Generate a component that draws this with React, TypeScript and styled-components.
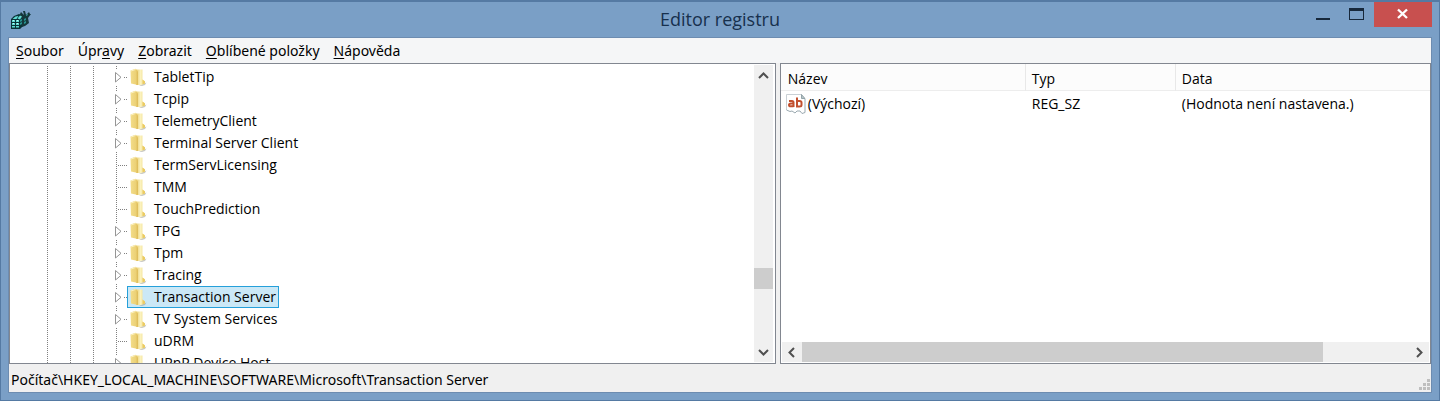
import React from "react";
import styled, { createGlobalStyle } from "styled-components";

const GlobalStyle = createGlobalStyle`
  * { box-sizing: border-box; }
  html, body, #root { height: 100%; }
  body {
    margin: 0;
    font: 14px/20px "Open Sans", "Noto Sans", sans-serif;
    color: #000;
  }
  button { font: inherit; color: inherit; border: 0; padding: 0; background: none; }
`;

const Window = styled.div`
  display: flex;
  flex-direction: column;
  height: 100%;
  padding: 0 7px 7px;
  background: #7a9fc6;
  border: 1px solid #557aa3;
  border-top-width: 2px;
  overflow: hidden;
`;

const TitleBar = styled.header`
  display: grid;
  grid-template-columns: 1fr auto 1fr;
  flex: none;
  height: 35px;
`;

const AppIcon = styled.svg`
  width: 22px;
  height: 22px;
  margin: 7px 0 0 2px;
`;

const Title = styled.h1`
  margin: 0;
  font-size: 18px;
  font-weight: 400;
  line-height: 34px;
  color: #17304d;
`;

const WindowButtons = styled.div`
  display: flex;
  justify-content: flex-end;
`;

const CaptionButton = styled.button<{ $close?: boolean }>`
  width: ${(p) => (p.$close ? 58 : 34)}px;
  height: 25px;
  background: ${(p) => (p.$close ? "#c8504f" : "transparent")};
  svg { display: block; margin: 0 auto; }
`;

const Client = styled.div`
  display: flex;
  flex-direction: column;
  flex: 1;
  min-height: 0;
  background: #f0f0f0;
  border: 1px solid #6d8cb0;
`;

const MenuBar = styled.nav`
  display: flex;
  flex: none;
  height: 25px;
  font-family: "Noto Sans", "Open Sans", sans-serif;
  background: #f5f6f7;
`;

const MenuItem = styled.button`
  padding: 0 7px;
  line-height: 24px;
  u { text-underline-offset: 2px; text-decoration-thickness: 1px; }
`;

const Panes = styled.main`
  display: flex;
  gap: 4px;
  flex: 1;
  min-height: 0;
`;

const Pane = styled.section<{ $share: number }>`
  display: flex;
  flex: ${(p) => p.$share} 1 0;
  min-width: 0;
  background: #fff;
  border: 1px solid #828790;
`;

const TreePane = styled(Pane)`
  padding-right: 2px;
`;

const ListPane = styled(Pane)`
  flex-direction: column;
  padding-bottom: 1px;
`;

const Tree = styled.ul`
  flex: 1;
  min-width: 0;
  margin: 0;
  padding: 2px 0 0 26px;
  list-style: none;
  overflow: hidden;
`;

const TreeRow = styled.li`
  display: flex;
  height: 22px;
`;

const Guide = styled.span`
  flex: none;
  width: 23px;
  background: repeating-linear-gradient(#808080 0 1px, transparent 1px 2px) 11px 0 / 1px 100% no-repeat;
`;

const Connector = styled.svg`
  flex: none;
  width: 22px;
  height: 22px;
`;

const NodeLabel = styled.span<{ $selected?: boolean }>`
  display: flex;
  gap: 7px;
  padding: 0 2px;
  line-height: 20px;
  white-space: nowrap;
  border: 1px solid ${(p) => (p.$selected ? "#26a0da" : "transparent")};
  background: ${(p) => (p.$selected ? "#cbe8f6" : "transparent")};
  svg { flex: none; margin-top: 1px; }
`;

const ScrollBar = styled.div<{ $horizontal?: boolean }>`
  display: flex;
  flex: none;
  flex-direction: ${(p) => (p.$horizontal ? "row" : "column")};
  ${(p) => (p.$horizontal ? "height: 20px; margin: 0 1px;" : "width: 19px; margin: 1px 0;")}
  background: #f0f0f0;
`;

const ScrollButton = styled.button`
  display: grid;
  place-items: center;
  flex: none;
  width: 20px;
  height: 20px;
`;

const Track = styled.div<{ $horizontal?: boolean }>`
  display: flex;
  flex: 1;
  flex-direction: ${(p) => (p.$horizontal ? "row" : "column")};
`;

const TrackSpace = styled.span<{ $share: number }>`
  flex: ${(p) => p.$share} 1 0;
`;

const Thumb = styled.span<{ $share: number }>`
  flex: ${(p) => p.$share} 1 0;
  background: #cdcdcd;
`;

const TableArea = styled.div`
  flex: 1;
  min-height: 0;
  overflow: hidden;
`;

const Values = styled.table`
  width: 100%;
  table-layout: fixed;
  border-collapse: separate;
  border-spacing: 0;
  th, td {
    text-align: left;
    font-weight: 400;
    white-space: nowrap;
    padding: 0 6px;
  }
  th {
    height: 27px;
    padding-top: 3px;
    background: #fcfcfc;
    border-bottom: 1px solid #ededed;
    border-right: 1px solid #e8e8e8;
  }
  th:first-child { padding-left: 7px; }
  th:last-child { border-right: 0; }
  td { height: 26px; }
  td:first-child { padding-left: 5px; }
`;

const Column = styled.col<{ $width?: number }>`
  width: ${(p) => (p.$width ? `${p.$width}px` : "auto")};
`;

const ValueName = styled.span`
  display: flex;
  align-items: center;
  gap: 2px;
`;

const StatusBar = styled.footer`
  display: flex;
  justify-content: space-between;
  align-items: flex-end;
  flex: none;
  height: 28px;
  padding: 0 0 1px 2px;
  font-family: "Noto Sans", "Open Sans", sans-serif;
  line-height: 22px;
`;

type Node = { name: string; leaf?: boolean; selected?: boolean };

const nodes: Node[] = [
  { name: "TabletTip" },
  { name: "Tcpip" },
  { name: "TelemetryClient" },
  { name: "Terminal Server Client" },
  { name: "TermServLicensing", leaf: true },
  { name: "TMM", leaf: true },
  { name: "TouchPrediction", leaf: true },
  { name: "TPG" },
  { name: "Tpm" },
  { name: "Tracing" },
  { name: "Transaction Server", selected: true },
  { name: "TV System Services" },
  { name: "uDRM", leaf: true },
  { name: "UPnP Device Host" },
];

const menus = [
  ["", "S", "oubor"],
  ["Úpr", "a", "vy"],
  ["", "Z", "obrazit"],
  ["", "O", "blíbené položky"],
  ["", "N", "ápověda"],
];

const RegistryIcon = () => (
  <AppIcon viewBox="0 0 22 22" aria-hidden="true">
    <path d="M1 10l3-3 5-2 3 1 1 3 3-1 2 2-1 5-4 2-3 3H1z" fill="#0a3338" />
    <path d="M10 5l1-2 3 3-1-4 2 0 1 4 3-3 1 2 1 0-3 4 1 5-4 3-3 1z" fill="#14383b" />
    <path d="M2.500 10l3-2.500 3-.5-2 3zM7.500 9.500l2.500-3 2 1-2 3z" fill="#62dcd4" />
    <path d="M2 11h3v2H2zM6 11h3v2H6zM2 14h3v2H2zM6 14h3v2H6zM2 17h3v1.500H2zM6 17h3v1.500H6z" fill="#5fd9d3" />
    <path d="M3 11h1v1H3zM7 11h1v1H7zM3 14h1v1H3zM7 14h1v1H7z" fill="#c4fff8" />
    <path d="M10 11l2-1v2l-2 1zM10 14l2-1v2l-2 1zM14 10l2-1v2l-2 1zM14 13l2-1v2l-2 1z" fill="#27928f" />
    <path d="M17 5l1 0-1 2-1 0z" fill="#3aa39f" />
  </AppIcon>
);

const FolderIcon = () => (
  <svg width="17" height="18" viewBox="0 0 17 18" aria-hidden="true">
    <defs>
      <linearGradient id="folderFront" x1="0" x2="1">
        <stop offset="0" stopColor="#f3dd8a" />
        <stop offset="0.7" stopColor="#ecd176" />
        <stop offset="1" stopColor="#dcb955" />
      </linearGradient>
      <linearGradient id="folderBack" x1="0" x2="1">
        <stop offset="0" stopColor="#e9cd6e" />
        <stop offset="0.5" stopColor="#fbf2bd" />
        <stop offset="1" stopColor="#f0da85" />
      </linearGradient>
    </defs>
    <path d="M9 17.500l7.500-3-1.500 2.500-3 1z" fill="#9c9c92" opacity=".55" />
    <path d="M6 1.500h6.500v10l2.500 2v2l-4 1.500H6z" fill="url(#folderBack)" />
    <path d="M12.500 11.500l2.500 2v2l-2.500.8z" fill="#ebcb62" />
    <path d="M.5 2.500L5.500.8 8 3.500V17L1 15.500z" fill="url(#folderFront)" />
    <path d="M1 3l4.500-1.500" stroke="#fbf0bd" />
  </svg>
);

const StringIcon = () => (
  <svg width="20" height="20" viewBox="0 0 20 20" aria-hidden="true">
    <path d="M.5.5h15l3.500 4v14l-3 1-2-2.500-3 0-2 2-3-2-2 .5-3.500-1.500z" fill="#fff" />
    <path d="M.5 16V.5h15" fill="none" stroke="#c9d0d5" />
    <path d="M15.500.5v4h3.500z" fill="#b9c5c9" stroke="#82959b" strokeWidth=".8" />
    <path d="M19 5v13.500l-3 1-2-2.500h-3l-2 2-3-2-2 .5L.5 16" fill="none" stroke="#9ba9b0" />
    <g fill="none" stroke="#c2502f" strokeWidth="2">
      <path d="M3 7h3q1.500 0 1.500 1.500V13M7.500 9.500H5Q3 9.500 3 11t2 1.200h2.500" />
      <path d="M11 3.500v9h2.500q2 0 2-1.500V8.500q0-1.500-2-1.500H11" />
    </g>
  </svg>
);

const TreeConnector = ({ leaf }: { leaf?: boolean }) => (
  <Connector viewBox="0 0 22 22" aria-hidden="true" shapeRendering={leaf ? "crispEdges" : "auto"}>
    {leaf ? (
      <path d="M11.5 0v22M13 11.500h9" stroke="#808080" strokeDasharray="1 1" fill="none" />
    ) : (
      <>
        <path d="M11.500 0v1M11.500 2v1M11.500 20v1M21 11.500h1M19 11.500h1" stroke="#808080" />
        <path d="M10.500 6.500v9.500l5.500-4.700z" fill="#fff" stroke="#959595" />
      </>
    )}
  </Connector>
);

const arrows = {
  up: "M1 8l4.500-4.500L10 8",
  down: "M1 3l4.500 4.500L10 3",
  left: "M8 1L3.500 5.500 8 10",
  right: "M3 1l4.500 4.500L3 10",
};

const Arrow = ({ to }: { to: keyof typeof arrows }) => (
  <ScrollButton aria-label={to}>
    <svg width="11" height="11" viewBox="0 0 11 11">
      <path d={arrows[to]} fill="none" stroke="#505050" strokeWidth="2" />
    </svg>
  </ScrollButton>
);

const ResizeGrip = () => (
  <svg width="12" height="12" viewBox="0 0 12 12" aria-hidden="true">
    <path d="M8 0h3v3H8zM4 4h3v3H4zM8 4h3v3H8zM0 8h3v3H0zM4 8h3v3H4zM8 8h3v3H8z" fill="#bfbfbf" />
  </svg>
);

export default function App() {
  return (
    <>
      <GlobalStyle />
      <Window>
        <TitleBar>
          <RegistryIcon />
          <Title>Editor registru</Title>
          <WindowButtons>
            <CaptionButton aria-label="Minimalizovat">
              <svg width="14" height="25" viewBox="0 0 14 25"><path d="M0 16h14v2H0z" fill="#17283b" /></svg>
            </CaptionButton>
            <CaptionButton aria-label="Maximalizovat">
              <svg width="16" height="25" viewBox="0 0 16 25"><path d="M0 6h15v12H0zM1 9v8h13V9z" fill="#17283b" fillRule="evenodd" /></svg>
            </CaptionButton>
            <CaptionButton $close aria-label="Zavřít">
              <svg width="12" height="25" viewBox="0 0 12 25"><path d="M1 7.500l9 8.500M10 7.500L1 16" stroke="#fff" strokeWidth="2.400" /></svg>
            </CaptionButton>
          </WindowButtons>
        </TitleBar>
        <Client>
          <MenuBar>
            {menus.map(([before, key, after]) => (
              <MenuItem key={key + after}>{before}<u>{key}</u>{after}</MenuItem>
            ))}
          </MenuBar>
          <Panes>
            <TreePane $share={766}>
              <Tree role="tree">
                {nodes.map((node) => (
                  <TreeRow key={node.name} role="treeitem" aria-selected={!!node.selected}>
                    <Guide />
                    <Guide />
                    <Guide />
                    <TreeConnector leaf={node.leaf} />
                    <NodeLabel $selected={node.selected}><FolderIcon />{node.name}</NodeLabel>
                  </TreeRow>
                ))}
              </Tree>
              <ScrollBar>
                <Arrow to="up" />
                <Track>
                  <TrackSpace $share={183} />
                  <Thumb $share={21} />
                  <TrackSpace $share={53} />
                </Track>
                <Arrow to="down" />
              </ScrollBar>
            </TreePane>
            <ListPane $share={652}>
              <TableArea>
                <Values>
                  <colgroup>
                    <Column $width={245} />
                    <Column $width={150} />
                    <Column />
                  </colgroup>
                  <thead>
                    <tr><th>Název</th><th>Typ</th><th>Data</th></tr>
                  </thead>
                  <tbody>
                    <tr>
                      <td><ValueName><StringIcon />(Výchozí)</ValueName></td>
                      <td>REG_SZ</td>
                      <td>(Hodnota není nastavena.)</td>
                    </tr>
                  </tbody>
                </Values>
              </TableArea>
              <ScrollBar $horizontal>
                <Arrow to="left" />
                <Track $horizontal>
                  <Thumb $share={521} />
                  <TrackSpace $share={86} />
                </Track>
                <Arrow to="right" />
              </ScrollBar>
            </ListPane>
          </Panes>
          <StatusBar>
            <span>Počítač\HKEY_LOCAL_MACHINE\SOFTWARE\Microsoft\Transaction Server</span>
            <ResizeGrip />
          </StatusBar>
        </Client>
      </Window>
    </>
  );
}
